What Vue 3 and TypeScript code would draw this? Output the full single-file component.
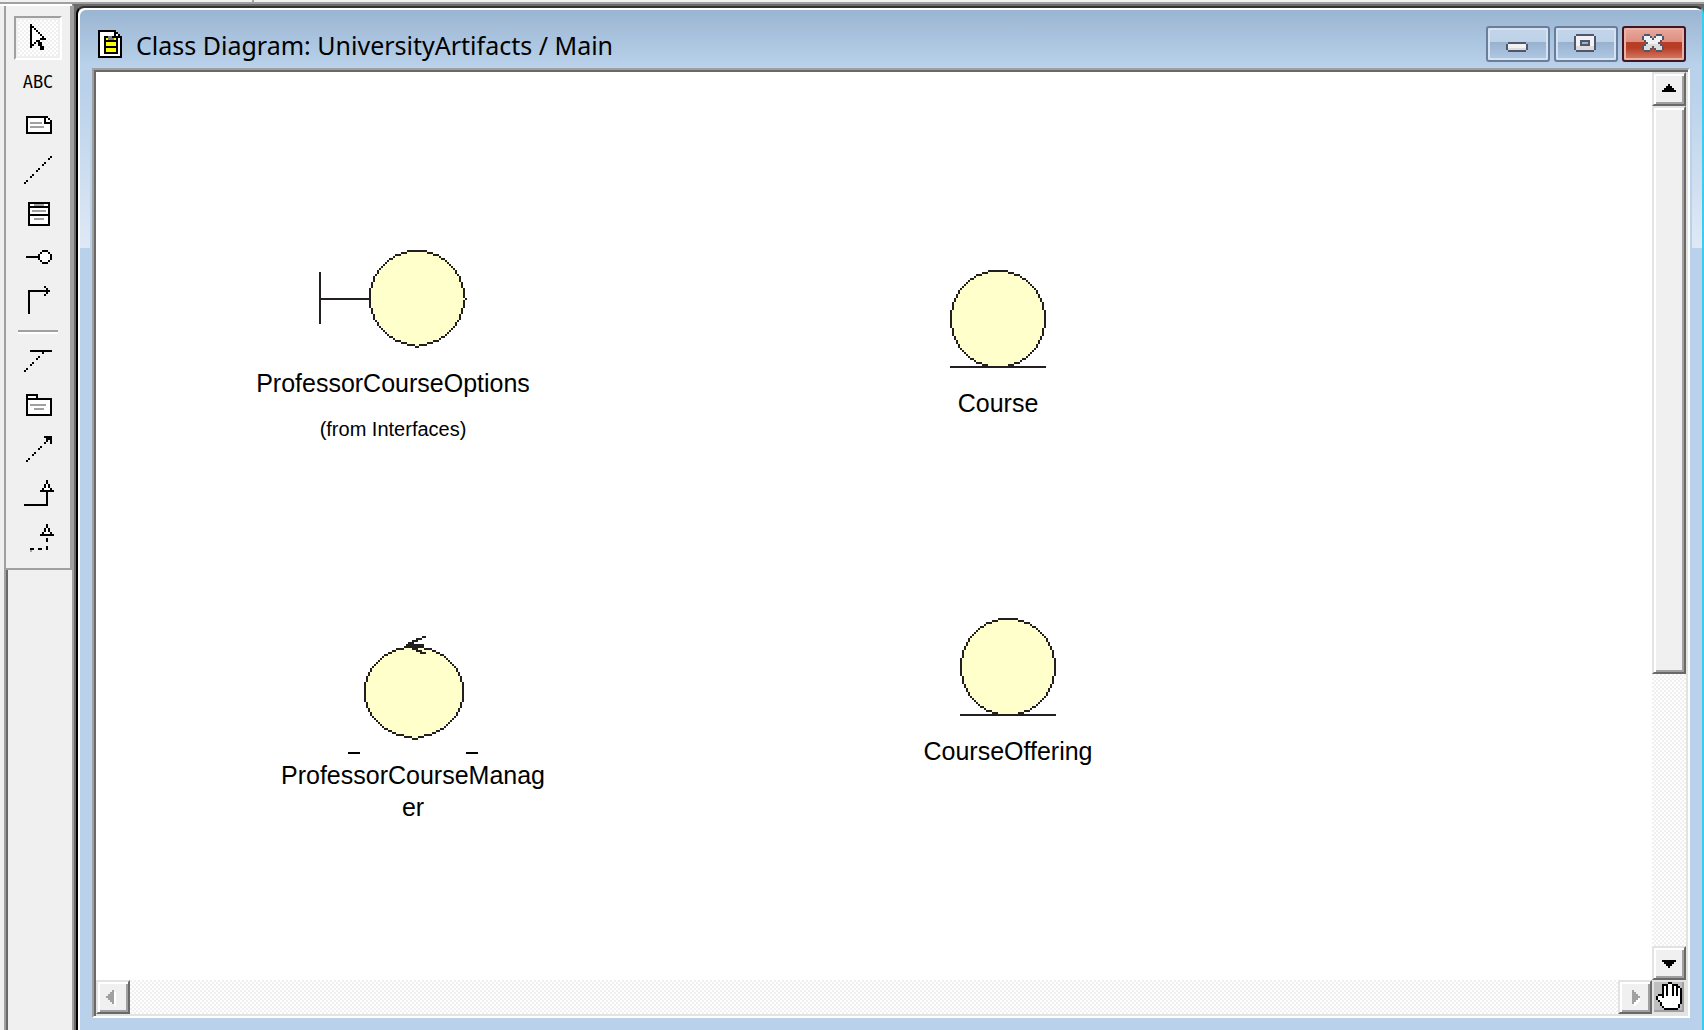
<script setup lang="ts">
interface Run {
  fill: string
  d: string
}

interface Tool {
  name: string
  x: number
  y: number
  rows: string[]
  text?: string
}

interface DiagramNode {
  label: string
  source?: string
  kind: 'boundary' | 'entity' | 'control'
  left: number
  top: number
  width: number
}

const palette: Record<string, string> = {
  '#': '#000000',
  '.': '#ffffff',
  g: '#a0a0a0',
  G: '#808080',
  y: '#ffff00',
  o: '#231f20',
  c: '#ffffcc',
  d: '#50566b',
  l: '#f2f2f2',
  m: '#dcdcdc',
}

/* Turns a pixel map into one path per colour, merging horizontal runs. */
function runs(rows: string[], ox = 0, oy = 0): Run[] {
  const paths: Record<string, string> = {}
  rows.forEach((row, y) => {
    let x = 0
    while (x < row.length) {
      const ch = row[x]
      let end = x
      while (end < row.length && row[end] === ch) end++
      if (palette[ch]) {
        paths[ch] = (paths[ch] ?? '') + `M${x + ox} ${y + oy}h${end - x}v1h${x - end}z`
      }
      x = end
    }
  })
  return Object.keys(paths).map((ch) => ({ fill: palette[ch], d: paths[ch] }))
}

/* Pixel map of a filled ellipse with a one-cell outline. */
function ellipse(w: number, h: number): string[] {
  const inside = (x: number, y: number) =>
    ((x + 0.5 - w / 2) / (w / 2)) ** 2 + ((y + 0.5 - h / 2) / (h / 2)) ** 2 <= 1
  return Array.from({ length: h }, (_, y) =>
    Array.from({ length: w }, (_, x) => {
      if (!inside(x, y)) return ' '
      const edge = !inside(x - 1, y) || !inside(x + 1, y) || !inside(x, y - 1) || !inside(x, y + 1)
      return edge ? 'o' : 'c'
    }).join(''),
  )
}

const shapes = {
  boundary: { w: 74, h: 49, runs: runs(ellipse(48, 48), 25, 0) },
  entity: { w: 48, h: 49, runs: runs(ellipse(48, 49), 0, 0) },
  control: { w: 65, h: 53, runs: runs(ellipse(50, 46), 8, 6) },
}

const triangle = [
  '           #   ',
  '           #   ',
  '          #.#  ',
  '          #.#  ',
  '         #...# ',
  '        #######',
]

const classTools: Tool[] = [
  {
    name: 'Selection Tool', x: 8, y: 4,
    rows: [
      '#        ',
      '##       ',
      '#.#      ',
      '#..#     ',
      '#...#    ',
      '#....#   ',
      '#.....#  ',
      '#....### ',
      '#..##    ',
      '#.# ##   ',
      '##  ##   ',
      '#    ##  ',
      '     ##  ',
    ],
  },
  { name: 'Text Box', x: 0, y: 0, rows: [], text: 'ABC' },
  {
    name: 'Note', x: 6, y: 6,
    rows: [
      '###########  ',
      '#........#.# ',
      '#........#..#',
      '#.gggggg.####',
      '#...........#',
      '#.ggggggg...#',
      '#...........#',
      '#...........#',
      '#############',
    ],
  },
  {
    name: 'Anchor Note to Item', x: 5, y: 4,
    rows: [
      '             #',
      '            # ',
      '',
      '          #   ',
      '         #    ',
      '',
      '       #      ',
      '      #       ',
      '',
      '    #         ',
      '   #          ',
      '',
      ' #            ',
      '#             ',
    ],
  },
  {
    name: 'Class', x: 7, y: 5,
    rows: [
      '###########',
      '#..ggggg..#',
      '###########',
      '#.........#',
      '#.ggggggg.#',
      '#.........#',
      '###########',
      '#.........#',
      '#..ggggg..#',
      '#.........#',
      '#.........#',
      '###########',
    ],
  },
  {
    name: 'Interface', x: 6, y: 7,
    rows: [
      '        ###  ',
      '       #...# ',
      '      #.....#',
      '#######.....#',
      '      #.....#',
      '       #...# ',
      '        ###  ',
    ],
  },
  {
    name: 'Unidirectional Association', x: 7, y: 3,
    rows: [
      '        #  ',
      '         # ',
      '###########',
      '#        # ',
      '#       #  ',
      ...Array(9).fill('#'),
    ],
  },
]

const relationTools: Tool[] = [
  {
    name: 'Association Class', x: 5, y: 6,
    rows: [
      '   ###########',
      '         #    ',
      '',
      '       #      ',
      '      #       ',
      '',
      '    #         ',
      '   #          ',
      '',
      ' #            ',
      '#             ',
    ],
  },
  {
    name: 'Package', x: 6, y: 6,
    rows: [
      '######       ',
      '#....#       ',
      '#############',
      '#...........#',
      '#...........#',
      '#.gggggggg..#',
      '#...........#',
      '#...ggggg...#',
      '#...........#',
      '#...........#',
      '#############',
    ],
  },
  {
    name: 'Dependency or Instantiates', x: 6, y: 5,
    rows: [
      '         ####',
      '          ###',
      '          # #',
      '         #  #',
      '',
      '       #     ',
      '      #      ',
      '',
      '    #        ',
      '   #         ',
      '',
      ' #           ',
      '#            ',
    ],
  },
  {
    name: 'Generalization', x: 5, y: 5,
    rows: [
      ...triangle,
      ...Array(6).fill('           #'),
      '############',
    ],
  },
  {
    name: 'Realize', x: 5, y: 5,
    rows: [
      ...triangle,
      '',
      '           #',
      '           #',
      '',
      '',
      '           #',
      '   ##  ##  #',
      '   g',
    ],
  },
]

const toolGroups = [classTools, relationTools]

const documentIcon = runs([
  '#########   ',
  '#.......##  ',
  '#.......#.# ',
  '#..##GG#####',
  '#..#yGGGy#.#',
  '#..#######.#',
  '#..#yyyyy#.#',
  '#..#yyyyy#.#',
  '#..#######.#',
  '#..#yyyyy#.#',
  '#..#yyyyy#.#',
  '#..#######.#',
  '#..........#',
  '############',
])

const captionButtons = [
  {
    name: 'Minimize', kind: 'plain',
    runs: runs([
      ' ddddddddd ',
      'dllllllllld',
      'dllllllllld',
      'dmmmmmmmmmd',
      ' ddddddddd ',
    ], 8, 6),
  },
  {
    name: 'Restore', kind: 'plain',
    runs: runs([
      ' ddddddddd ',
      'dllllllllld',
      'dllllllllld',
      'dlldddddlld',
      'dlld   dlld',
      'dlldddddlld',
      'dmmmmmmmmmd',
      'dmmmmmmmmmd',
      ' ddddddddd ',
    ], 8, 2),
  },
  {
    name: 'Close', kind: 'close',
    runs: runs([
      ' ddd   ddd ',
      'dllld dllld',
      'dlllldlllld',
      ' dllllllld ',
      '  dllllld  ',
      ' dmmmmmmmd ',
      'dmmmmdmmmmd',
      'dmmmd dmmmd',
      ' ddd   ddd ',
    ], 8, 2),
  },
]

const arrows = {
  up: runs(['   #', '  ###', ' #####', '#######'], 4, 5),
  down: runs(['#######', ' #####', '  ###', '   #'], 4, 6),
  left: runs(['   g', '  gg.', ' ggg.', 'gggg.', ' ggg.', '  gg.', '   g.', '    .'], 4, 4),
  right: runs(['g', 'gg', 'ggg', 'gggg', 'ggg.', 'gg..', 'g..', ' .'], 6, 4),
}

const hand = runs([
  '      ##     ',
  '   ###..###  ',
  '   #.#..#.## ',
  '   #.#..#.#.#',
  '   #.#..#.#.#',
  '   #.#..#.#.#',
  ' ###.#..#.#.#',
  '#..#........#',
  '#...........#',
  ' #..........#',
  '  #.........#',
  '  #........# ',
  '   #.......# ',
  '    #######  ',
], 1, 0)

const nodes: DiagramNode[] = [
  { label: 'ProfessorCourseOptions', source: '(from Interfaces)', kind: 'boundary', left: 157, top: 178, width: 280 },
  { label: 'Course', kind: 'entity', left: 802, top: 198, width: 200 },
  { label: 'ProfessorCourseManager', kind: 'control', left: 182, top: 562, width: 270 },
  { label: 'CourseOffering', kind: 'entity', left: 812, top: 546, width: 200 },
]
</script>

<template>
  <div class="shell">
    <div class="topbar"></div>
    <div class="workspace">
      <aside class="dock">
        <div class="toolbox" role="toolbar" aria-label="Diagram toolbox">
          <div v-for="(group, g) in toolGroups" :key="g" class="tool-group">
            <button
              v-for="(tool, t) in group"
              :key="tool.name"
              type="button"
              class="tool"
              :class="{ selected: g === 0 && t === 0 }"
              :aria-label="tool.name"
            >
              <span v-if="tool.text" class="tool-text">{{ tool.text }}</span>
              <svg v-else viewBox="0 0 22 20" width="44" height="40" shape-rendering="crispEdges">
                <path v-for="r in runs(tool.rows, tool.x - 1, tool.y - 1)" :key="r.fill" :d="r.d" :fill="r.fill" />
              </svg>
            </button>
          </div>
        </div>
      </aside>

      <main class="mdi">
        <section class="window">
          <header class="titlebar">
            <svg class="doc-icon" viewBox="0 0 12 14" width="24" height="28" shape-rendering="crispEdges">
              <path v-for="r in documentIcon" :key="r.fill" :d="r.d" :fill="r.fill" />
            </svg>
            <h1>Class Diagram: UniversityArtifacts / Main</h1>
            <div class="caption-buttons">
              <button v-for="b in captionButtons" :key="b.name" type="button" class="caption" :class="b.kind" :aria-label="b.name">
                <svg viewBox="0 0 28 14" width="56" height="28" shape-rendering="crispEdges">
                  <path v-for="r in b.runs" :key="r.fill" :d="r.d" :fill="r.fill" />
                </svg>
              </button>
            </div>
          </header>

          <div class="client">
            <div class="canvas">
              <figure
                v-for="n in nodes"
                :key="n.label"
                class="node"
                :style="{ left: n.left + 'px', top: n.top + 'px', width: n.width + 'px' }"
              >
                <svg
                  :viewBox="`0 0 ${shapes[n.kind].w} ${shapes[n.kind].h}`"
                  :width="shapes[n.kind].w * 2"
                  :height="shapes[n.kind].h * 2"
                  shape-rendering="crispEdges"
                >
                  <path v-for="r in shapes[n.kind].runs" :key="r.fill" :d="r.d" :fill="r.fill" />
                  <template v-if="n.kind === 'boundary'">
                    <path d="M0 11h1v26h-1zM1 24h24v1h-24zM73 24h1v1h-1zM48 48h2v1h-2z" fill="#231f20" />
                    <path d="M72 24h1v1h-1zM48 47h2v1h-2z" fill="#ffffcc" />
                  </template>
                  <path v-if="n.kind === 'entity'" d="M0 48h48v1h-48z" fill="#231f20" />
                  <template v-if="n.kind === 'control'">
                    <path d="M29 5h9v1h-9zM30 4h3v1h-3zM32 3h3v1h-3zM34 2h3v1h-3zM37 1h2v1h-2zM31 6h2v1h-2zM32 7h3v1h-3zM34 8h3v1h-3zM36 9h3v1h-3zM32 52h3v1h-3z" fill="#231f20" />
                    <path d="M32 51h3v1h-3z" fill="#ffffcc" />
                    <path d="M0 59h6v1h-6zM59 59h6v1h-6z" fill="#000" />
                  </template>
                </svg>
                <figcaption>
                  <span class="label">{{ n.label }}</span>
                  <span v-if="n.source" class="source">{{ n.source }}</span>
                </figcaption>
              </figure>
            </div>

            <div class="scroll vertical">
              <button type="button" class="bevel arrow" aria-label="Scroll up">
                <svg viewBox="0 0 15 15" width="30" height="30" shape-rendering="crispEdges"><path v-for="r in arrows.up" :key="r.fill" :d="r.d" :fill="r.fill" /></svg>
              </button>
              <div class="track">
                <div class="bevel thumb"></div>
              </div>
              <button type="button" class="bevel arrow" aria-label="Scroll down">
                <svg viewBox="0 0 15 15" width="30" height="30" shape-rendering="crispEdges"><path v-for="r in arrows.down" :key="r.fill" :d="r.d" :fill="r.fill" /></svg>
              </button>
            </div>

            <div class="scroll horizontal">
              <button type="button" class="bevel arrow" aria-label="Scroll left">
                <svg viewBox="0 0 15 15" width="30" height="30" shape-rendering="crispEdges"><path v-for="r in arrows.left" :key="r.fill" :d="r.d" :fill="r.fill" /></svg>
              </button>
              <div class="track"></div>
              <button type="button" class="bevel arrow" aria-label="Scroll right">
                <svg viewBox="0 0 15 15" width="30" height="30" shape-rendering="crispEdges"><path v-for="r in arrows.right" :key="r.fill" :d="r.d" :fill="r.fill" /></svg>
              </button>
            </div>

            <button type="button" class="pan" aria-label="Pan diagram">
              <svg viewBox="0 0 15 15" width="30" height="30" shape-rendering="crispEdges"><path v-for="r in hand" :key="r.fill" :d="r.d" :fill="r.fill" /></svg>
            </button>
          </div>
        </section>
      </main>
    </div>
  </div>
</template>

<style>
body {
  margin: 0;
  overflow: hidden;
}
</style>

<style scoped>
.shell {
  display: flex;
  flex-direction: column;
  height: 100vh;
  background: #f0f0f0;
  font-family: "Liberation Sans", Arial, sans-serif;
}

button {
  box-sizing: border-box;
  margin: 0;
  padding: 0;
  border: 0;
  background: none;
  font: inherit;
  color: #000;
}

svg {
  display: block;
  flex: none;
}

.topbar {
  flex: none;
  height: 2px;
  border-bottom: 2px solid #a0a0a0;
  background: linear-gradient(90deg, transparent 252px, #a0a0a0 252px, #a0a0a0 254px, transparent 254px);
}

.workspace {
  display: flex;
  flex: 1;
  min-height: 0;
}

/* Toolbox */
.dock {
  display: flex;
  flex-direction: column;
  flex: none;
  box-sizing: border-box;
  width: 72px;
  padding-left: 4px;
  border-top: 2px solid #fff;
}

.dock::after {
  content: "";
  flex: 1;
  border-left: 2px solid #a0a0a0;
  box-shadow: inset 2px 0 #696969;
}

.toolbox {
  padding: 10px 8px;
  border: solid #a0a0a0;
  border-width: 0 2px 2px;
}

.tool-group + .tool-group {
  margin: 6px 4px 0;
  padding-top: 6px;
  border-top: 2px solid #a0a0a0;
  box-shadow: inset 0 2px #fff;
}

.tool-group + .tool-group .tool {
  margin-left: -4px;
}

.tool {
  display: flex;
  align-items: center;
  justify-content: center;
  width: 48px;
  height: 44px;
}

.tool.selected {
  border: 2px solid;
  border-color: #a0a0a0 #fff #fff #a0a0a0;
  box-shadow: inset 0 0 0 2px #f0f0f0;
  background: repeating-conic-gradient(#fff 0 25%, #f0f0f0 0 50%) 0 0 / 4px 4px;
}

.tool-text {
  font-family: "DejaVu Sans Mono", monospace;
  font-size: 17px;
  line-height: 20px;
}

/* Child window */
.mdi {
  display: flex;
  flex: 1;
  min-width: 0;
  border-left: 2px solid #a0a0a0;
  border-top: 2px solid #696969;
  background: #696969;
}

.window {
  display: flex;
  flex-direction: column;
  flex: 1;
  box-sizing: border-box;
  min-width: 0;
  margin-left: 2px;
  padding: 0 12px 12px 14px;
  border-left: 2px solid #000;
  border-top: 2px solid #333;
  border-right: 2px solid #3ecbf1;
  border-radius: 8px 8px 0 0;
  box-shadow: inset 2px 2px #fff;
  background:
    linear-gradient(#99b4d1, #b9d1ea 58px, #b9d1ea 80px, #dfe9f5 240px) 0 0 / 12px 240px no-repeat,
    linear-gradient(#99b4d1, #b9d1ea 58px, #b9d1ea 80px, #dfe9f5 240px) 100% 0 / 10px 240px no-repeat,
    linear-gradient(#99b4d1, #b9d1ea 58px);
}

.titlebar {
  display: flex;
  flex: none;
  align-items: center;
  gap: 14px;
  height: 36px;
  padding: 18px 4px 6px 6px;
}

h1 {
  flex: 1;
  margin: 0;
  padding-top: 2px;
  font: 400 25px/32px "Noto Sans", sans-serif;
  white-space: nowrap;
}

.caption-buttons {
  display: flex;
  gap: 4px;
}

.caption {
  display: flex;
  align-items: center;
  justify-content: center;
  width: 64px;
  height: 36px;
  border: 2px solid #6a7d9c;
  border-radius: 3px;
  box-shadow: inset 0 0 0 2px #d5e2f1;
  background: linear-gradient(#c3d6ea, #bdd1e8 44%, #98b1ce 44%, #b0cae6);
}

.caption.close {
  border-color: #431422;
  box-shadow: inset 0 0 0 2px #eab1a6;
  background: linear-gradient(#eaa89c, #dd8e80 44%, #b83d25 44%, #b83d25 62%, #d5806a);
}

.client {
  display: grid;
  grid-template: minmax(0, 1fr) 34px / minmax(0, 1fr) 34px;
  flex: 1;
  min-height: 0;
  border: 2px solid;
  border-color: #a0a0a0 #fff #fff #a0a0a0;
  background: #fff;
  padding: 2px;
  box-shadow: inset 2px 2px #696969, inset -2px -2px #e3e3e3;
}

/* Diagram */
.canvas {
  position: relative;
  overflow: hidden;
}

.node {
  position: absolute;
  display: flex;
  flex-direction: column;
  align-items: center;
  margin: 0;
}

.node svg {
  overflow: visible;
}

figcaption {
  display: flex;
  flex-direction: column;
  align-items: center;
  gap: 18px;
  width: 100%;
  margin-top: 19px;
  text-align: center;
}

.label {
  max-width: 100%;
  font-size: 25px;
  line-height: 32px;
  overflow-wrap: anywhere;
}

.source {
  font-size: 20px;
  line-height: 24px;
}

/* Scroll bars */
.scroll {
  display: flex;
}

.vertical {
  flex-direction: column;
}

.track {
  flex: 1;
  background: repeating-conic-gradient(#fff 0 25%, #f0f0f0 0 50%) 0 0 / 4px 4px;
}

.bevel {
  box-sizing: border-box;
  border: 2px solid;
  border-color: #e3e3e3 #696969 #696969 #e3e3e3;
  background: #f0f0f0;
  box-shadow: inset 2px 2px #fff, inset -2px -2px #a0a0a0;
}

.arrow {
  flex: none;
  width: 34px;
  height: 34px;
}

.thumb {
  height: 67.6%;
}

.pan {
  width: 34px;
  height: 34px;
  border: 2px solid #e3e3e3;
  background: #bfbfbf;
  box-shadow: inset -2px -2px #a0a0a0;
}
</style>
